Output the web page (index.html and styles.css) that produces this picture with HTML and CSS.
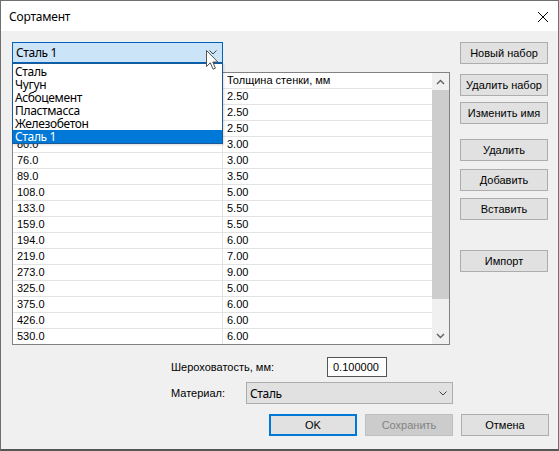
FILE: index.html
```html
<!DOCTYPE html>
<html lang="ru">
<head>
<meta charset="utf-8">
<title>Сортамент</title>
<link rel="stylesheet" href="styles.css">
</head>
<body>
<div class="window">
  <div class="titlebar">
    <span class="title">Сортамент</span>
    <svg class="close" width="12" height="12" viewBox="0 0 12 12"><path d="M1 1 L11 11 M11 1 L1 11" stroke="#000" stroke-width="1" fill="none"/></svg>
  </div>
  <div class="client">
    <div class="main">
      <div class="left">
        <div class="combo-wrap">
          <div class="combo open">
            <span class="combo-text">Сталь 1</span>
            <svg class="chev" width="8" height="5" viewBox="0 0 8 5"><path d="M0.5 0.5 L4 4 L7.5 0.5" stroke="#444" fill="none"/></svg>
          </div>
          <ul class="droplist">
            <li>Сталь</li>
            <li>Чугун</li>
            <li>Асбоцемент</li>
            <li>Пластмасса</li>
            <li>Железобетон</li>
            <li class="sel">Сталь 1</li>
          </ul>
          <svg class="cursor" width="13" height="21" viewBox="0 0 13 21"><path d="M0.5 0.5 L0.5 16.5 L4.3 12.8 L7 19.2 L9.4 18.2 L6.8 12 L11.8 12 Z" fill="#fff" stroke="#555" stroke-width="1" stroke-linejoin="round"/></svg>
        </div>
        <div class="grid">
          <div class="cells">
            <div class="row head"><div class="c1"></div><div class="c2">Толщина стенки, мм</div></div>
            <div class="row"><div class="c1"></div><div class="c2">2.50</div></div>
            <div class="row"><div class="c1"></div><div class="c2">2.50</div></div>
            <div class="row"><div class="c1"></div><div class="c2">2.50</div></div>
            <div class="row"><div class="c1">80.0</div><div class="c2">3.00</div></div>
            <div class="row"><div class="c1">76.0</div><div class="c2">3.00</div></div>
            <div class="row"><div class="c1">89.0</div><div class="c2">3.50</div></div>
            <div class="row"><div class="c1">108.0</div><div class="c2">5.00</div></div>
            <div class="row"><div class="c1">133.0</div><div class="c2">5.50</div></div>
            <div class="row"><div class="c1">159.0</div><div class="c2">5.50</div></div>
            <div class="row"><div class="c1">194.0</div><div class="c2">6.00</div></div>
            <div class="row"><div class="c1">219.0</div><div class="c2">7.00</div></div>
            <div class="row"><div class="c1">273.0</div><div class="c2">9.00</div></div>
            <div class="row"><div class="c1">325.0</div><div class="c2">5.00</div></div>
            <div class="row"><div class="c1">375.0</div><div class="c2">6.00</div></div>
            <div class="row"><div class="c1">426.0</div><div class="c2">6.00</div></div>
            <div class="row last"><div class="c1">530.0</div><div class="c2">6.00</div></div>
          </div>
          <div class="vscroll">
            <div class="sbtn"><svg width="9" height="6" viewBox="0 0 9 6"><path d="M1 5 L4.5 1.5 L8 5" stroke="#606060" stroke-width="1.4" fill="none"/></svg></div>
            <div class="track"><div class="thumb"></div></div>
            <div class="sbtn"><svg width="9" height="6" viewBox="0 0 9 6"><path d="M1 1 L4.5 4.5 L8 1" stroke="#606060" stroke-width="1.4" fill="none"/></svg></div>
          </div>
        </div>
      </div>
      <div class="side">
        <button class="btn b-new">Новый набор</button>
        <button class="btn b-delset">Удалить набор</button>
        <button class="btn b-rename">Изменить имя</button>
        <button class="btn b-del">Удалить</button>
        <button class="btn b-add">Добавить</button>
        <button class="btn b-ins">Вставить</button>
        <button class="btn b-imp">Импорт</button>
      </div>
    </div>
    <div class="form">
      <div class="frow">
        <span class="lbl lbl-rough">Шероховатость, мм:</span>
        <div class="input">0.100000</div>
      </div>
      <div class="frow frow2">
        <span class="lbl lbl-mat">Материал:</span>
        <div class="combo2">
          <span class="combo-text">Сталь</span>
          <svg class="chev" width="8" height="5" viewBox="0 0 8 5"><path d="M0.5 0.5 L4 4 L7.5 0.5" stroke="#444" fill="none"/></svg>
        </div>
      </div>
    </div>
    <div class="actions">
      <button class="btn b-ok">OK</button>
      <button class="btn b-save" disabled>Сохранить</button>
      <button class="btn b-cancel">Отмена</button>
    </div>
  </div>
</div>
</body>
</html>
```

FILE: styles.css
```css
* { box-sizing: border-box; }
html, body { margin: 0; padding: 0; }
body {
  width: 559px;
  height: 451px;
  overflow: hidden;
  font-family: "Liberation Sans", Arial, sans-serif;
  font-size: 11px;
  color: #000;
}
.window {
  width: 559px;
  height: 451px;
  border: 1px solid #6f6f6f;
  border-bottom-width: 2px;
  border-bottom-color: #555;
  background: #f0f0f0;
  display: flex;
  flex-direction: column;
}
.titlebar {
  height: 30px;
  background: #fff;
  display: flex;
  align-items: center;
  justify-content: space-between;
  padding: 0 9px 0 8px;
  flex: none;
}
.title {
  font-family: "Noto Sans", sans-serif;
  font-size: 12px;
  letter-spacing: -0.2px;
}
.close { display: block; margin-top: 1px; }
.client {
  flex: 1;
  padding: 11px 9px 0 11px;
}
.main { display: flex; }
.left { width: 438px; }
.combo-wrap { position: relative; width: 211px; }
.combo {
  height: 21px;
  border: 1px solid #0062b8;
  background: #cce4f7;
  display: flex;
  align-items: center;
  justify-content: space-between;
  padding: 0 5px 0 3px;
}
.combo-text {
  font-family: "Noto Sans", sans-serif;
  font-size: 12px;
  letter-spacing: -0.35px;
}
.chev { display: block; }
.droplist {
  position: absolute;
  left: 0;
  top: 21px;
  width: 211px;
  margin: 0;
  padding: 1px 0 0 0;
  list-style: none;
  background: #fff;
  border: 1px solid #1b5a97;
  z-index: 5;
  box-shadow: 1px 1px 2px rgba(0,0,0,0.15);
}
.droplist li {
  height: 13px;
  line-height: 13px;
  padding-left: 2px;
  font-family: "Noto Sans", sans-serif;
  font-size: 12px;
  letter-spacing: -0.35px;
  white-space: nowrap;
}
.droplist li.sel { background: #0078d7; color: #fff; }
.cursor {
  position: absolute;
  left: 194px;
  top: 8px;
  z-index: 6;
}
.grid {
  margin-top: 9px;
  width: 438px;
  height: 273px;
  border: 1px solid #828282;
  background: #fff;
  display: flex;
}
.cells { width: 419px; }
.row {
  display: flex;
  height: 16px;
  border-bottom: 1px solid #e3e3e3;
  line-height: 15px;
}
.row.last { height: 15px; border-bottom: 0; }
.c1 {
  width: 210px;
  border-right: 1px solid #e3e3e3;
  padding-left: 4px;
}
.c2 { width: 209px; padding-left: 4px; }
.vscroll {
  width: 17px;
  background: #f0f0f0;
  display: flex;
  flex-direction: column;
}
.sbtn {
  height: 17px;
  display: flex;
  align-items: center;
  justify-content: center;
  flex: none;
}
.track { flex: 1; }
.thumb { height: 209px; background: #cdcdcd; }
.side {
  margin-left: 10px;
  width: 88px;
  display: flex;
  flex-direction: column;
}
.btn {
  width: 88px;
  height: 22px;
  border: 1px solid #adadad;
  background: #e1e1e1;
  font-family: "Liberation Sans", Arial, sans-serif;
  font-size: 11px;
  color: #000;
  padding: 0;
  margin: 0;
  white-space: nowrap;
}
.b-delset { margin-top: 10px; }
.b-rename { margin-top: 6px; }
.b-del { margin-top: 15px; }
.b-add { margin-top: 8px; }
.b-ins { margin-top: 7px; }
.b-imp { margin-top: 30px; }
.form { margin-top: 12px; padding-left: 159px; }
.frow { display: flex; align-items: center; }
.frow2 { margin-top: 5px; }
.lbl-rough { width: 156px; }
.lbl-mat { width: 75px; }
.input {
  width: 60px;
  height: 20px;
  border: 1px solid #555;
  background: #fff;
  line-height: 18px;
  padding-left: 5px;
}
.combo2 {
  width: 207px;
  height: 22px;
  border: 1px solid #adadad;
  background: #e1e1e1;
  display: flex;
  align-items: center;
  justify-content: space-between;
  padding: 0 5px 0 3px;
}
.actions {
  margin-top: 10px;
  padding-left: 257px;
  display: flex;
  gap: 8px;
}
.b-ok { border: 2px solid #0078d7; }
.b-save { background: #cccccc; border-color: #bfbfbf; color: #838383; }
```
